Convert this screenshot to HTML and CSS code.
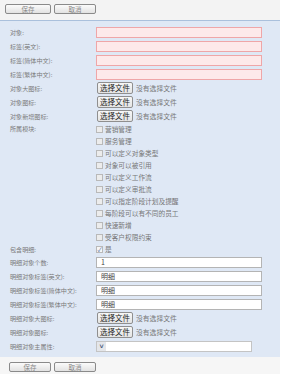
FILE: index.html
```html
<!DOCTYPE html>
<html lang="zh-CN">
<head>
  <meta charset="UTF-8" />
  <title>对象编辑</title>
  <link rel="stylesheet" href="styles.css">
</head>
<body>
  <div class="page">
    <div class="toolbar">
      <button class="btn btn-save">保存</button>
      <button class="btn btn-cancel">取消</button>
    </div>

    <div class="panel">
      <div class="row"><span class="lbl">对象:</span><input class="txt req" type="text" /></div>
      <div class="row"><span class="lbl">标签(英文):</span><input class="txt req" type="text" /></div>
      <div class="row"><span class="lbl">标签(简体中文):</span><input class="txt req" type="text" /></div>
      <div class="row"><span class="lbl">标签(繁体中文):</span><input class="txt req" type="text" /></div>

      <div class="row"><span class="lbl">对象大图标:</span><span class="file"><span class="file-btn">选择文件</span> 没有选择文件</span></div>
      <div class="row"><span class="lbl">对象图标:</span><span class="file"><span class="file-btn">选择文件</span> 没有选择文件</span></div>
      <div class="row"><span class="lbl">对象新增图标:</span><span class="file"><span class="file-btn">选择文件</span> 没有选择文件</span></div>

      <div class="row row-top">
        <span class="lbl">所属模块:</span>
        <div class="checks">
          <label class="chk"><span class="box"></span>营销管理</label>
          <label class="chk"><span class="box"></span>服务管理</label>
          <label class="chk"><span class="box"></span>可以定义对象类型</label>
          <label class="chk"><span class="box"></span>对象可以被引用</label>
          <label class="chk"><span class="box"></span>可以定义工作流</label>
          <label class="chk"><span class="box"></span>可以定义审批流</label>
          <label class="chk"><span class="box"></span>可以指定阶段计划及提醒</label>
          <label class="chk"><span class="box"></span>每阶段可以有不同的员工</label>
          <label class="chk"><span class="box"></span>快速新增</label>
          <label class="chk"><span class="box"></span>受客户权限约束</label>
        </div>
      </div>
      <div class="row row-chk"><span class="lbl">包含明细:</span><label class="chk"><span class="box checked">✓</span>是</label></div>

      <div class="row"><span class="lbl">明细对象个数:</span><input class="txt" type="text" value="1" /></div>
      <div class="row"><span class="lbl">明细对象标签(英文):</span><input class="txt" type="text" value="明细" /></div>
      <div class="row"><span class="lbl">明细对象标签(简体中文):</span><input class="txt" type="text" value="明细" /></div>
      <div class="row"><span class="lbl">明细对象标签(繁体中文):</span><input class="txt" type="text" value="明细" /></div>
      <div class="row"><span class="lbl">明细对象大图标:</span><span class="file"><span class="file-btn">选择文件</span> 没有选择文件</span></div>
      <div class="row"><span class="lbl">明细对象图标:</span><span class="file"><span class="file-btn">选择文件</span> 没有选择文件</span></div>
      <div class="row"><span class="lbl">明细对象主属性:</span><span class="combo"><span class="arrow">˅</span><span class="combo-field"></span></span></div>
    </div>

    <div class="toolbar toolbar-bottom">
      <button class="btn btn-save">保存</button>
      <button class="btn btn-cancel">取消</button>
    </div>
  </div>
</body>
</html>
```

FILE: styles.css
```css
body {
  margin: 0;
  background: #fff;
  font-family: "Noto Sans CJK SC", "Liberation Sans", sans-serif;
  font-size: 7px;
  color: #777;
}
.page {
  width: 280px;
}
.toolbar {
  height: 20px;
  background: #f3f3f3;
  display: flex;
  align-items: flex-start;
  gap: 3px;
  padding: 4px 0 0 5px;
  box-sizing: border-box;
}
.toolbar-bottom {
  height: 17px;
  padding: 5px 0 0 9px;
  background: #f6f6f6;
}
.btn {
  height: 10px;
  padding: 0;
  border: 1px solid #8a8a8a;
  border-radius: 2px;
  background: linear-gradient(#fbfbfb, #e2e2e2);
  font-family: inherit;
  font-size: 6.5px;
  line-height: 8px;
  color: #888;
}
.btn-save {
  width: 46px;
}
.btn-cancel {
  width: 42px;
}
.toolbar-bottom .btn-save {
  width: 42px;
}
.panel {
  background: #dfe8f5;
  border-top: 1px solid #aac0dc;
  padding: 4px 0 4px 10px;
}
.row {
  display: flex;
  align-items: center;
  height: 14px;
}
.row-top {
  align-items: flex-start;
  height: auto;
}
.row-top .lbl {
  line-height: 12px;
}
.row-chk {
  height: 12px;
}
.lbl {
  width: 86px;
  flex: none;
  white-space: nowrap;
  font-size: 6.1px;
  color: #7a7a7a;
}
.txt {
  width: 166px;
  height: 11px;
  box-sizing: border-box;
  margin: 0;
  padding: 0 4px;
  border: 1px solid #b4b4b4;
  background: #fff;
  font-family: inherit;
  font-size: 7px;
  color: #444;
}
.txt.req {
  background: #fde9ea;
  border-color: #efa6a8;
}
.file {
  display: flex;
  align-items: center;
  gap: 3px;
  padding-left: 1px;
  color: #777;
  font-size: 6.8px;
}
.file-btn {
  display: inline-block;
  width: 36px;
  height: 12px;
  box-sizing: border-box;
  border: 1px solid #8f8f8f;
  border-radius: 2px;
  background: linear-gradient(#f7f7f7, #e4e4e4);
  color: #222;
  text-align: center;
  line-height: 10px;
  font-size: 7.5px;
}
.checks {
  display: flex;
  flex-direction: column;
}
.chk {
  display: flex;
  align-items: center;
  gap: 2px;
  height: 12px;
  font-size: 6.7px;
  color: #777;
}
.box {
  width: 7px;
  height: 7px;
  box-sizing: border-box;
  border: 1px solid #b9b9b9;
  background: #ececec;
  font-size: 6px;
  line-height: 5px;
  text-align: center;
  color: #3a5a96;
}
.box.checked {
  background: #f6f6f6;
}
.combo {
  display: flex;
  align-items: center;
  width: 156px;
  height: 11px;
  border: 1px solid #c4c4c4;
  box-sizing: border-box;
  background: #fff;
}
.arrow {
  width: 9px;
  height: 9px;
  background: #e4e6ea;
  color: #4a5a7a;
  font-size: 7px;
  line-height: 9px;
  text-align: center;
  font-weight: bold;
}
.combo-field {
  flex: 1;
}
```
